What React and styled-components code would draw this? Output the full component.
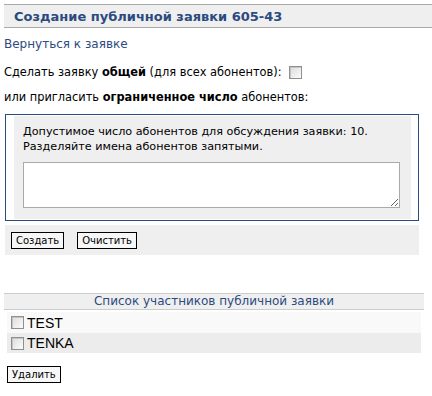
import React from 'react';
import styled, { createGlobalStyle } from 'styled-components';

const GlobalStyle = createGlobalStyle`
  html, body {
    margin: 0;
    padding: 0;
    background: #fff;
    font-family: "DejaVu Sans", Verdana, sans-serif;
    font-size: 12px;
    color: #000;
  }
`;

const Page = styled.div`
  padding: 4px 0 0 4px;
  width: 428px;
`;

const TitleBar = styled.div`
  height: 22px;
  background: #efefef;
  border-top: 1px solid #aaa;
  border-bottom: 1px solid #aaa;
  display: flex;
  align-items: center;
  padding-left: 10px;
  font-size: 13px;
  font-weight: bold;
  color: #2b4a80;
`;

const BackLink = styled.a`
  display: block;
  margin-top: 9px;
  line-height: 15px;
  color: #2b4a80;
  text-decoration: none;
  font-size: 12px;
`;

const Line = styled.div`
  margin-top: ${p => p.$gap}px;
  line-height: 15px;
  font-size: 11.4px;
  display: flex;
  align-items: center;
  gap: 7px;
`;

const Check = styled.input.attrs({ type: 'checkbox' })`
  appearance: none;
  margin: 0;
  width: 13px;
  height: 13px;
  box-sizing: border-box;
  border: 1px solid #8f8f8f;
  background: linear-gradient(135deg, #dcdcdc, #fbfbfb);
  box-shadow: inset 1px 1px 0 #c4c4c4;
  flex: none;
`;

const InviteBox = styled.div`
  margin: 9px 0 0 1px;
  width: 414px;
  box-sizing: border-box;
  border: 1px solid #2b4a80;
  padding: 1px 7px 1px 8px;
`;

const InviteInner = styled.div`
  background: #efefef;
  padding: 8px 10px 11px 9px;
`;

const Hint = styled.p`
  margin: 0;
  line-height: 15px;
  font-size: 11.2px;
`;

const Area = styled.textarea`
  display: block;
  margin-top: 8px;
  width: 377px;
  height: 46px;
  box-sizing: border-box;
  border: 1px solid #aaa;
  background: #fff;
  resize: both;
  font-family: inherit;
`;

const ButtonBar = styled.div`
  margin: 4px 0 0 1px;
  width: 414px;
  height: 30px;
  background: #efefef;
  display: flex;
  align-items: center;
  gap: 13px;
  padding-left: 6px;
  box-sizing: border-box;
`;

const Button = styled.button`
  display: block;
  height: 17px;
  padding: 0 4px;
  border: 1px solid #000;
  background: #f7f7f7;
  font-family: "DejaVu Sans", Verdana, sans-serif;
  font-size: 10px;
  line-height: 15px;
  color: #000;
  margin: ${p => p.$top || 0}px 0 0 ${p => p.$left || 0}px;
`;

const ListHeader = styled.div`
  margin-top: 38px;
  width: 420px;
  height: 15px;
  background: #efefef;
  border-top: 1px solid #ccc;
  border-bottom: 1px solid #ccc;
  text-align: center;
  line-height: 15px;
  font-size: 12px;
  color: #2b4a80;
`;

const List = styled.div`
  margin: 2px 0 0 3px;
  width: 414px;
`;

const Row = styled.label`
  display: flex;
  align-items: center;
  gap: 3px;
  height: ${p => (p.$alt ? 20 : 21)}px;
  padding-left: 4px;
  background: ${p => (p.$alt ? '#ececec' : '#f9f9f9')};
  font-family: "Liberation Sans", Arial, sans-serif;
  font-size: 14px;
`;

const rows = ['TEST', 'TENKA'];

export default function App() {
  return (
    <>
      <GlobalStyle />
      <Page>
        <TitleBar>Создание публичной заявки 605-43</TitleBar>
        <BackLink href="#">Вернуться к заявке</BackLink>
        <Line $gap={13}>
          <span>
            Сделать заявку <b>общей</b> (для всех абонентов):
          </span>
          <Check />
        </Line>
        <Line $gap={10}>
          <span>
            или пригласить <b>ограниченное число</b> абонентов:
          </span>
        </Line>
        <InviteBox>
          <InviteInner>
            <Hint>
              Допустимое число абонентов для обсуждения заявки: 10.
              <br />
              Разделяйте имена абонентов запятыми.
            </Hint>
            <Area />
          </InviteInner>
        </InviteBox>
        <ButtonBar>
          <Button>Создать</Button>
          <Button>Очистить</Button>
        </ButtonBar>
        <ListHeader>Список участников публичной заявки</ListHeader>
        <List>
          {rows.map((name, i) => (
            <Row key={name} $alt={i % 2 === 1}>
              <Check />
              {name}
            </Row>
          ))}
        </List>
        <Button $left={3} $top={13}>Удалить</Button>
      </Page>
    </>
  );
}
